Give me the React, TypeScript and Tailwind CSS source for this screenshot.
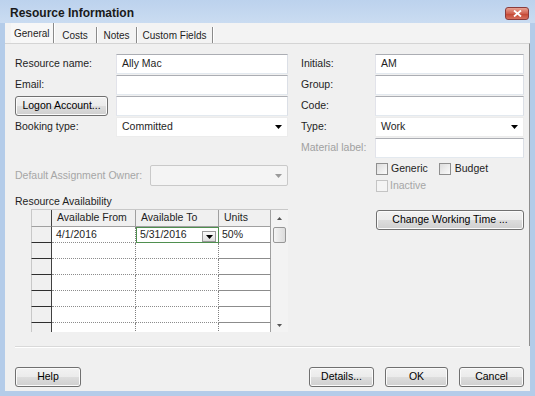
import React from "react";

const btn =
  "h-[20px] flex items-center justify-center rounded-[3px] border border-[#707070] bg-[linear-gradient(#f2f2f2_0%,#ebebeb_50%,#dddddd_51%,#cfcfcf_100%)] shadow-[inset_0_0_0_1px_#fbfbfb] text-[#000]";

const Arrow = ({ color = "#000" }: { color?: string }) => (
  <svg width="7" height="4" viewBox="0 0 7 4">
    <path d="M0 0H7L3.5 4Z" fill={color} />
  </svg>
);

const TextBox = ({ value = "", className = "" }: { value?: string; className?: string }) => (
  <div className={`h-[20px] bg-white border border-[#abadb3] border-l-[#e2e3ea] border-r-[#dbdfe6] border-b-[#e3e9ef] flex items-center px-[5px] ${className}`}>
    {value}
  </div>
);

const Select = ({ value, className = "" }: { value: string; className?: string }) => (
  <div className={`h-[20px] bg-white border border-[#ececec] flex items-center justify-between pl-[5px] pr-[5px] ${className}`}>
    <span>{value}</span>
    <Arrow />
  </div>
);

const Check = ({ disabled = false }: { disabled?: boolean }) => (
  <div
    className={`w-[12px] h-[12px] border ${
      disabled ? "border-[#c4c4c4] bg-[#f4f4f4]" : "border-[#8f8f8f] bg-[linear-gradient(135deg,#dcdcdc,#fbfbfb)]"
    }`}
  />
);

const Row = ({ label, children, labelW, gray = false }: { label: string; children: React.ReactNode; labelW: string; gray?: boolean }) => (
  <div className="flex items-center">
    <div className={`${labelW} shrink-0 ${gray ? "text-[#a0a0a0]" : ""}`}>{label}</div>
    <div className="flex-1">{children}</div>
  </div>
);

const rows = [0, 1, 2, 3, 4, 5, 6];

export default function App() {
  return (
    <div className="w-[535px] h-[396px] bg-[#b4cce9] flex flex-col font-['Liberation_Sans',Arial,sans-serif] text-[10.5px] text-[#1e1e1e] overflow-hidden">
      {/* title bar */}
      <div className="h-[23px] shrink-0 flex items-center justify-between pl-[10px] pr-[6px] bg-[linear-gradient(#bcd2ed,#cadcf1)]">
        <span className="text-[12px] font-bold text-[#1a1a1a] mt-[3px]">Resource Information</span>
        <div className="w-[24px] h-[13px] mt-[3px] rounded-[3px] border border-[#8a3c3c] bg-[linear-gradient(#e8a293,#d0604f_50%,#c2432f_51%,#d7705f)] flex items-center justify-center">
          <svg width="9" height="7" viewBox="0 0 9 7">
            <path d="M1 0.5L8 6.5M8 0.5L1 6.5" stroke="#fff" strokeWidth="1.8" />
          </svg>
        </div>
      </div>

      <div className="flex-1 mx-[5px] mb-[5px] bg-[#f0f0f0] flex flex-col">
        {/* tabs */}
        <div className="h-[20px] shrink-0 flex items-end pl-[6px] pt-[2px] bg-[#f3f3f3] text-[10px]">
          <div className="w-[43px] h-[20px] flex items-center pl-[3px] bg-[#f7f7f7] border-r border-[#8a8a8a] shadow-[1px_0_0_#fff]">General</div>
          <div className="w-[43px] h-[16px] flex items-center justify-center border-r border-[#8a8a8a] shadow-[1px_0_0_#fff]">Costs</div>
          <div className="w-[40px] h-[16px] flex items-center justify-center border-r border-[#8a8a8a] shadow-[1px_0_0_#fff]">Notes</div>
          <div className="w-[76px] h-[16px] flex items-center justify-center border-r border-[#8a8a8a] shadow-[1px_0_0_#fff]">Custom Fields</div>
        </div>

        {/* panel */}
        <div className="h-[303px] shrink-0 border-t border-r border-[#d4d4d4] border-r-[#8f8f8f] flex pt-[10px] pl-[10px]">
          {/* left column */}
          <div className="w-[273px] flex flex-col">
            <div className="flex flex-col gap-[1px]">
              <Row label="Resource name:" labelW="w-[101px]"><TextBox value="Ally Mac" /></Row>
              <Row label="Email:" labelW="w-[101px]"><TextBox /></Row>
              <div className="flex items-center">
                <div className={`${btn} w-[93px] mr-[8px]`}>Logon Account...</div>
                <div className="flex-1"><TextBox /></div>
              </div>
              <Row label="Booking type:" labelW="w-[101px]"><Select value="Committed" /></Row>
            </div>

            <div className="mt-[28px] flex items-center">
              <div className="w-[135px] shrink-0 text-[#a6a6a6]">Default Assignment Owner:</div>
              <div className="flex-1 h-[21px] rounded-[2px] border border-[#c9c9c9] bg-[#f4f4f4] flex items-center justify-end pr-[5px]">
                <Arrow color="#9a9a9a" />
              </div>
            </div>

            <div className="mt-[8px] h-[14px] leading-[14px]">Resource Availability</div>

            {/* grid */}
            <div className="mt-[1px] ml-[16px] w-[257px] h-[123px] flex overflow-hidden border-t border-[#c8c8c8]">
              <div className="w-[240px] flex flex-col">
                <div className="h-[17px] shrink-0 flex">
                  <div className="w-[21px] border-l border-[#c8c8c8] border-r border-r-[#404040] border-b border-b-[#a0a0a0]" />
                  <div className="w-[84px] border-r border-b border-[#a0a0a0] pl-[5px] flex items-center">Available From</div>
                  <div className="w-[83px] border-r border-b border-[#a0a0a0] pl-[5px] flex items-center">Available To</div>
                  <div className="w-[52px] border-r border-b border-[#a0a0a0] pl-[5px] flex items-center">Units</div>
                </div>
                {rows.map((i) => (
                  <div key={i} className="h-[16px] shrink-0 flex">
                    <div className="w-[21px] border-l border-[#c8c8c8] border-r border-r-[#404040] border-b border-b-[#2e2e2e]" />
                    <div className="w-[84px] bg-white border-r border-dotted border-[#808080] border-b border-b-solid border-b-[#8c8c8c] pl-[4px] flex items-center">
                      {i === 0 ? "4/1/2016" : ""}
                    </div>
                    {i === 0 ? (
                      <div className="w-[83px] bg-white border border-[#4f8f4f] pl-[3px] pr-[2px] flex items-center justify-between">
                        <span>5/31/2016</span>
                        <div className="w-[14px] h-[11px] mt-[2px] border border-[#9a9a9a] bg-[linear-gradient(#fafafa,#dedede)] flex items-end justify-center pb-[2px]">
                          <Arrow />
                        </div>
                      </div>
                    ) : (
                      <div className="w-[83px] bg-white border-r border-dotted border-[#808080] border-b border-b-solid border-b-[#8c8c8c]" />
                    )}
                    <div className="w-[52px] bg-white border-r border-[#a0a0a0] border-b border-b-[#8c8c8c] pl-[3px] flex items-center">
                      {i === 0 ? "50%" : ""}
                    </div>
                  </div>
                ))}
              </div>
              {/* scrollbar */}
              <div className="w-[17px] bg-[#f3f3f3] flex flex-col items-center">
                <div className="h-[17px] flex items-center justify-center">
                  <svg width="5" height="3" viewBox="0 0 5 3"><path d="M0 3H5L2.5 0Z" fill="#555" /></svg>
                </div>
                <div className="w-[13px] h-[16px] rounded-[2px] border border-[#979797] bg-[linear-gradient(90deg,#f4f4f4,#dcdcdc)]" />
                <div className="mt-[79px] h-[6px] flex items-center justify-center">
                  <svg width="5" height="3" viewBox="0 0 5 3"><path d="M0 0H5L2.5 3Z" fill="#555" /></svg>
                </div>
              </div>
            </div>
          </div>

          {/* right column */}
          <div className="w-[223px] ml-[13px] flex flex-col">
            <div className="flex flex-col gap-[1px]">
              <Row label="Initials:" labelW="w-[74px]"><TextBox value="AM" /></Row>
              <Row label="Group:" labelW="w-[74px]"><TextBox /></Row>
              <Row label="Code:" labelW="w-[74px]"><TextBox /></Row>
              <Row label="Type:" labelW="w-[74px]"><Select value="Work" /></Row>
              <Row label="Material label:" labelW="w-[74px]" gray><TextBox /></Row>
            </div>
            <div className="ml-[75px] mt-[4px] h-[14px] flex items-center">
              <Check />
              <span className="ml-[3px]">Generic</span>
              <div className="ml-[11px]"><Check /></div>
              <span className="ml-[4px]">Budget</span>
            </div>
            <div className="ml-[75px] mt-[3px] h-[14px] flex items-center text-[#a6a6a6]">
              <Check disabled />
              <span className="ml-[2px]">Inactive</span>
            </div>
            <div className={`${btn} ml-[75px] mt-[17px] w-[148px]`}>Change Working Time ...</div>
          </div>
        </div>

        {/* separator and buttons */}
        <div className="mx-[10px] h-[1px] bg-[#d9d9d9] shadow-[0_1px_0_#fff]" />
        <div className="mt-[20px] flex items-center pl-[10px] pr-[6px]">
          <div className={`${btn} w-[66px]`}>Help</div>
          <div className="flex-1" />
          <div className={`${btn} w-[65px]`}>Details...</div>
          <div className={`${btn} w-[63px] ml-[11px] border-[#3c7fb1] shadow-[inset_0_0_0_1px_#c5e6f7]`}>OK</div>
          <div className={`${btn} w-[65px] ml-[11px]`}>Cancel</div>
        </div>
      </div>
    </div>
  );
}
